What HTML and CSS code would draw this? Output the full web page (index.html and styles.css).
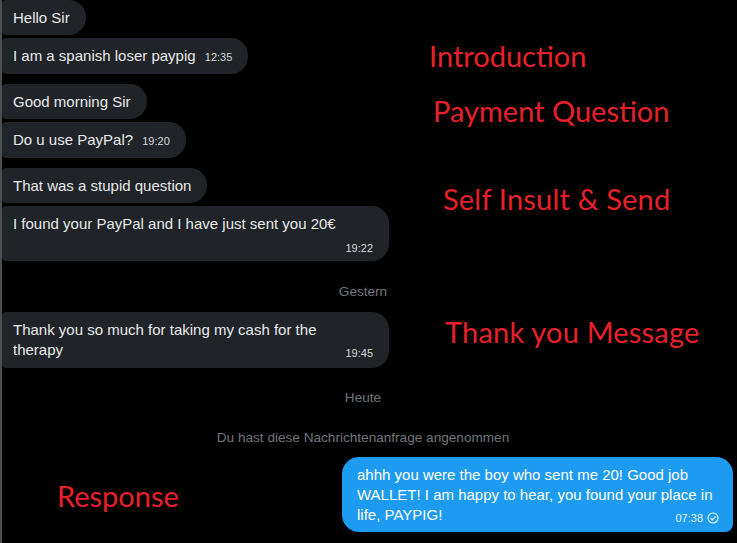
FILE: index.html
```html
<!DOCTYPE html>
<html lang="de">
<head>
  <meta charset="UTF-8" />
  <title>Nachrichten</title>
  <link rel="stylesheet" href="styles.css">
</head>
<body>
  <div class="chat">
    <div class="msg in">Hello Sir</div>
    <div class="msg in">I am a spanish loser paypig <span class="time">12:35</span></div>

    <div class="msg in group">Good morning Sir</div>
    <div class="msg in">Do u use PayPal? <span class="time">19:20</span></div>

    <div class="msg in group">That was a stupid question</div>
    <div class="msg in wide">
      I found your PayPal and I have just sent you 20€
      <span class="time row">19:22</span>
    </div>

    <div class="sep day">Gestern</div>

    <div class="msg in wide">Thank you so much for taking my cash for the<br>therapy <span class="time end">19:45</span></div>

    <div class="sep day today">Heute</div>
    <div class="sep notice">Du hast diese Nachrichtenanfrage angenommen</div>

    <div class="msg out">
      ahhh you were the boy who sent me 20! Good job WALLET! I am happy to hear, you found your place in life, PAYPIG!
      <span class="time end"><span>07:38</span><svg class="seen" viewBox="0 0 12 12" width="12" height="12"><circle cx="6" cy="6" r="5" fill="none" stroke="currentColor" stroke-width="1.2"/><path d="M3.6 6.2l1.7 1.7 3.2-3.4" fill="none" stroke="currentColor" stroke-width="1.2"/></svg></span>
    </div>
  </div>

  <!-- Beschriftungen über dem Verlauf -->
  <div class="note n-intro">Introduction</div>
  <div class="note n-question">Payment Question</div>
  <div class="note n-insult">Self Insult &amp; Send</div>
  <div class="note n-thanks">Thank you Message</div>
  <div class="note n-response">Response</div>
</body>
</html>
```

FILE: styles.css
```css
body { margin: 0; background: #000; font-family: "Liberation Sans", Arial, sans-serif; overflow: hidden; }

.chat { display: flex; flex-direction: column; align-items: flex-start; height: 543px; border-left: 2px solid #4d4d4d; }

.msg { box-sizing: border-box; font-size: 15px; line-height: 20px; border-radius: 4px 17px 17px 4px; }
.msg + .msg { margin-top: 3px; }
.msg.group { margin-top: 10px; }
.in { background: #202327; color: #e7e9ea; padding: 8px 16px 7px 11px; }
.wide { width: 387px; }

.time { font-size: 11px; color: #d6d9db; margin-left: 5px; }
.time.row { display: block; text-align: right; line-height: 16px; margin-top: 6px; margin-bottom: -2px; }
.time.end { float: right; line-height: 16px; margin-top: 5px; }

.sep { width: 722px; text-align: center; font-size: 13.6px; line-height: 16px; color: #71767b; }
.day { margin: 23px 0 12px; }
.day.today { margin-top: 22px; }
.notice { margin: 12px 0 11px; }

.out { align-self: flex-end; width: 391px; margin-right: 4px; background: #1d9bf0; color: #fff; padding: 8px 14px 6px 15px; border-radius: 17px 17px 8px 17px; }
.out .time { display: flex; align-items: center; gap: 4px; color: #e6f4fd; }

.note { position: absolute; font-family: Lato, "Open Sans", sans-serif; font-size: 29px; line-height: 29px; color: #e8202a; white-space: nowrap; }
.n-intro { left: 429px; top: 41px; }
.n-question { left: 433px; top: 96px; }
.n-insult { left: 443px; top: 184px; letter-spacing: 0.2px; }
.n-thanks { left: 445px; top: 317px; letter-spacing: 0.2px; }
.n-response { left: 57px; top: 481px; }
```
